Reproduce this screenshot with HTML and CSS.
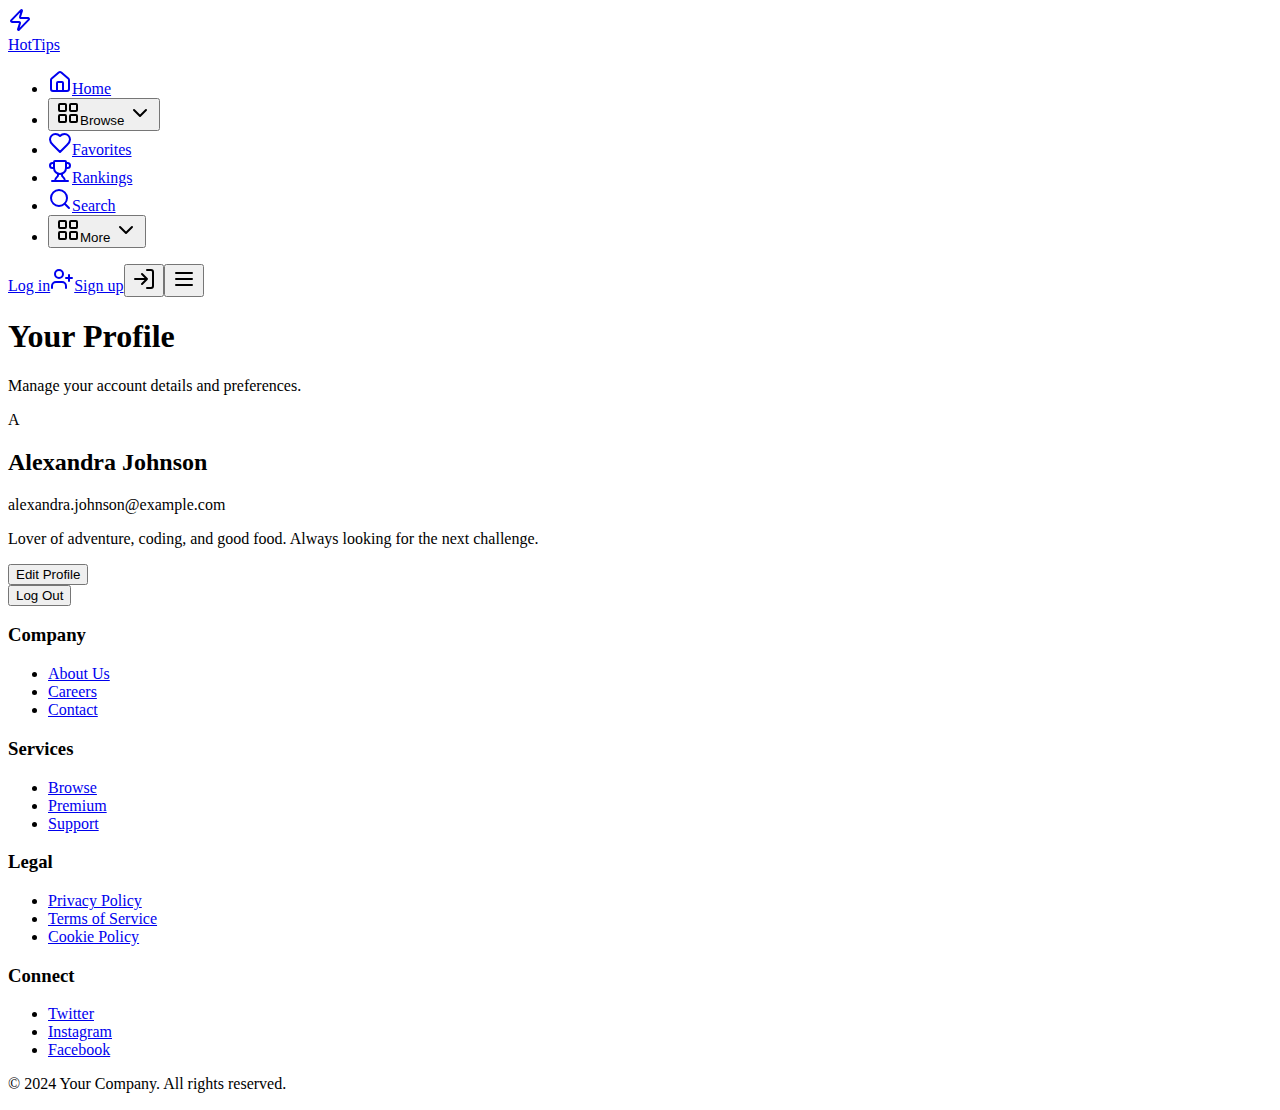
FILE: index.html
```html
<!DOCTYPE html>
<html lang="en">
<head>
<meta charset="utf-8">
<meta name="viewport" content="width=device-width, initial-scale=1">
<title>HotTips - Your Profile</title>
<link rel="stylesheet" href="styles.css">
</head>
<body>
<header>
<nav>
<a href="#"><div><svg class="icon" viewBox="0 0 24 24"><path d="M4 14a1 1 0 0 1-.78-1.63l9.9-10.2a.5.5 0 0 1 .86.46l-1.92 6.02A1 1 0 0 0 13 10h7a1 1 0 0 1 .78 1.63l-9.9 10.2a.5.5 0 0 1-.86-.46l1.92-6.02A1 1 0 0 0 11 14z"/></svg></div><span>HotTips</span></a>
<ul class="list">
<li><a href="#"><svg class="icon" viewBox="0 0 24 24"><path d="M15 21v-8a1 1 0 0 0-1-1h-4a1 1 0 0 0-1 1v8"/><path d="M3 10a2 2 0 0 1 .709-1.528l7-5.999a2 2 0 0 1 2.582 0l7 5.999A2 2 0 0 1 21 10v9a2 2 0 0 1-2 2H5a2 2 0 0 1-2-2z"/></svg><span>Home</span></a></li>
<li><button type="button"><svg class="icon" viewBox="0 0 24 24"><rect x="3" y="3" width="7" height="7" rx="1"/><rect x="14" y="3" width="7" height="7" rx="1"/><rect x="14" y="14" width="7" height="7" rx="1"/><rect x="3" y="14" width="7" height="7" rx="1"/></svg><span>Browse</span> <svg class="icon" viewBox="0 0 24 24"><path d="m6 9 6 6 6-6"/></svg></button></li>
<li><a href="#"><svg class="icon" viewBox="0 0 24 24"><path d="M19 14c1.49-1.46 3-3.21 3-5.5A5.5 5.5 0 0 0 16.5 3c-1.76 0-3 .5-4.5 2-1.5-1.5-2.74-2-4.5-2A5.5 5.5 0 0 0 2 8.5c0 2.3 1.5 4.05 3 5.5l7 7Z"/></svg><span>Favorites</span></a></li>
<li><a href="#"><svg class="icon" viewBox="0 0 24 24"><path d="M10 14.66v1.626a2 2 0 0 1-.976 1.696A5 5 0 0 0 7 21.978"/><path d="M14 14.66v1.626a2 2 0 0 0 .976 1.696A5 5 0 0 1 17 21.978"/><path d="M18 9h1.5a1 1 0 0 0 0-5H18"/><path d="M4 22h16"/><path d="M6 9a6 6 0 0 0 12 0V3a1 1 0 0 0-1-1H7a1 1 0 0 0-1 1z"/><path d="M6 9H4.5a1 1 0 0 1 0-5H6"/></svg><span>Rankings</span></a></li>
<li><a href="#"><svg class="icon" viewBox="0 0 24 24"><circle cx="11" cy="11" r="8"/><path d="m21 21-4.3-4.3"/></svg><span>Search</span></a></li>
<li><button type="button"><svg class="icon" viewBox="0 0 24 24"><rect x="3" y="3" width="7" height="7" rx="1"/><rect x="14" y="3" width="7" height="7" rx="1"/><rect x="14" y="14" width="7" height="7" rx="1"/><rect x="3" y="14" width="7" height="7" rx="1"/></svg><span>More</span> <svg class="icon" viewBox="0 0 24 24"><path d="m6 9 6 6 6-6"/></svg></button></li>
</ul>
<div><a href="#">Log in</a><a href="#"><svg class="icon" viewBox="0 0 24 24"><path d="M16 21v-2a4 4 0 0 0-4-4H6a4 4 0 0 0-4 4v2"/><circle cx="9" cy="7" r="4"/><path d="M19 8v6M22 11h-6"/></svg><span>Sign up</span></a><button type="button" aria-label="Log in"><svg class="icon" viewBox="0 0 24 24"><path d="M15 3h4a2 2 0 0 1 2 2v14a2 2 0 0 1-2 2h-4"/><path d="m10 17 5-5-5-5M15 12H3"/></svg></button><button type="button" aria-label="Open menu"><svg class="icon" viewBox="0 0 24 24"><path d="M4 12h16M4 6h16M4 18h16"/></svg></button></div>
</nav>
</header>
<main>
<h1>Your Profile</h1>
<p>Manage your account details and preferences.</p>
<div>A</div>
<h2>Alexandra Johnson</h2>
<p>alexandra.johnson@example.com</p>
<p>Lover of adventure, coding, and good food. Always looking for the next challenge.</p>
<div><button type="button">Edit Profile</button></div>
<div><button type="button">Log Out</button></div>
</main>
<footer>
<section><h3>Company</h3><ul class="list"><li><a href="#">About Us</a></li><li><a href="#">Careers</a></li><li><a href="#">Contact</a></li></ul></section>
<section><h3>Services</h3><ul class="list"><li><a href="#">Browse</a></li><li><a href="#">Premium</a></li><li><a href="#">Support</a></li></ul></section>
<section><h3>Legal</h3><ul class="list"><li><a href="#">Privacy Policy</a></li><li><a href="#">Terms of Service</a></li><li><a href="#">Cookie Policy</a></li></ul></section>
<section><h3>Connect</h3><ul class="list"><li><a href="#">Twitter</a></li><li><a href="#">Instagram</a></li><li><a href="#">Facebook</a></li></ul></section>
<p>© 2024 Your Company. All rights reserved.</p>
</footer>
</body>
</html>
```
FILE: styles.css
```css
body {
  margin: 8px;
  background: #fff;
  color: #000;
  font-family: "Liberation Serif", "Times New Roman", serif;
  font-size: 16px;
}

a {
  color: #0000ee;
}

button {
  font-family: "Liberation Sans", Arial, sans-serif;
}

.list {
  margin: 16px 0;
  padding-left: 40px;
}

.icon {
  width: 24px;
  height: 24px;
  fill: none;
  stroke: currentColor;
  stroke-width: 2;
  stroke-linecap: round;
  stroke-linejoin: round;
}
```
